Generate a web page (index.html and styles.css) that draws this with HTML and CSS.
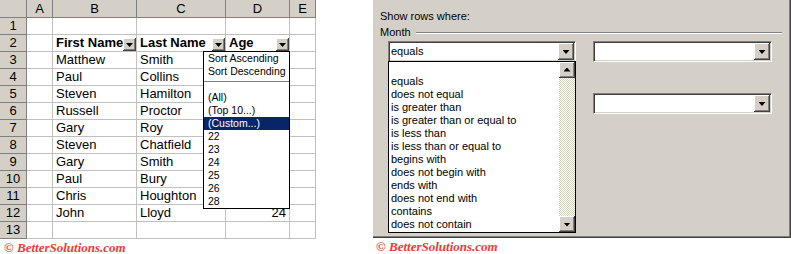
FILE: index.html
```html
<!DOCTYPE html>
<html lang="en">
<head>
    <meta charset="UTF-8">
    <title>AutoFilter</title>
    <link rel="stylesheet" href="styles.css">
</head>
<body>
    <div class="sheet-panel">
        <div class="sheet">
            <div class="cell hd"></div>
            <div class="cell hd">A</div>
            <div class="cell hd">B</div>
            <div class="cell hd">C</div>
            <div class="cell hd">D</div>
            <div class="cell hd">E</div>

            <div class="cell hd">1</div>
            <div class="cell"></div><div class="cell"></div><div class="cell"></div><div class="cell"></div><div class="cell"></div>

            <div class="cell hd">2</div>
            <div class="cell"></div>
            <div class="cell filter"><span class="label">First Name</span><span class="drop"></span></div>
            <div class="cell filter"><span class="label">Last Name</span><span class="drop"></span></div>
            <div class="cell filter"><span class="label">Age</span><span class="drop"></span></div>
            <div class="cell"></div>

            <div class="cell hd">3</div>
            <div class="cell"></div><div class="cell">Matthew</div><div class="cell">Smith</div><div class="cell"></div><div class="cell"></div>

            <div class="cell hd">4</div>
            <div class="cell"></div><div class="cell">Paul</div><div class="cell">Collins</div><div class="cell"></div><div class="cell"></div>

            <div class="cell hd">5</div>
            <div class="cell"></div><div class="cell">Steven</div><div class="cell">Hamilton</div><div class="cell"></div><div class="cell"></div>

            <div class="cell hd">6</div>
            <div class="cell"></div><div class="cell">Russell</div><div class="cell">Proctor</div><div class="cell"></div><div class="cell"></div>

            <div class="cell hd">7</div>
            <div class="cell"></div><div class="cell">Gary</div><div class="cell">Roy</div><div class="cell"></div><div class="cell"></div>

            <div class="cell hd">8</div>
            <div class="cell"></div><div class="cell">Steven</div><div class="cell">Chatfield</div><div class="cell"></div><div class="cell"></div>

            <div class="cell hd">9</div>
            <div class="cell"></div><div class="cell">Gary</div><div class="cell">Smith</div><div class="cell"></div><div class="cell"></div>

            <div class="cell hd">10</div>
            <div class="cell"></div><div class="cell">Paul</div><div class="cell">Bury</div><div class="cell"></div><div class="cell"></div>

            <div class="cell hd">11</div>
            <div class="cell"></div><div class="cell">Chris</div><div class="cell">Houghton</div><div class="cell"></div><div class="cell"></div>

            <div class="cell hd">12</div>
            <div class="cell"></div><div class="cell">John</div><div class="cell">Lloyd</div><div class="cell num">24</div><div class="cell"></div>

            <div class="cell hd">13</div>
            <div class="cell"></div><div class="cell"></div><div class="cell"></div><div class="cell"></div><div class="cell"></div>

            <!-- menu opened from the Age button -->
            <div class="filter-menu">
                <div class="item">Sort Ascending</div>
                <div class="item">Sort Descending</div>
                <div class="sep"></div>
                <div class="item">(All)</div>
                <div class="item">(Top 10...)</div>
                <div class="item selected">(Custom...)</div>
                <div class="item">22</div>
                <div class="item">23</div>
                <div class="item">24</div>
                <div class="item">25</div>
                <div class="item">26</div>
                <div class="item">28</div>
            </div>
        </div>
        <div class="credit">© BetterSolutions.com</div>
    </div>

    <div class="dialog-panel">
        <div class="dialog">
            <div class="caption">Show rows where:</div>
            <div class="group-title"><span>Month</span><span class="etch"></span></div>

            <div class="criteria">
                <div class="combo open">
                    <span class="value">equals</span>
                    <span class="btn"><span class="arrow down"></span></span>

                    <div class="list">
                        <div class="options">
                            <div class="opt">&nbsp;</div>
                            <div class="opt">equals</div>
                            <div class="opt">does not equal</div>
                            <div class="opt">is greater than</div>
                            <div class="opt">is greater than or equal to</div>
                            <div class="opt">is less than</div>
                            <div class="opt">is less than or equal to</div>
                            <div class="opt">begins with</div>
                            <div class="opt">does not begin with</div>
                            <div class="opt">ends with</div>
                            <div class="opt">does not end with</div>
                            <div class="opt">contains</div>
                            <div class="opt">does not contain</div>
                        </div>
                        <div class="scrollbar">
                            <span class="btn"><span class="arrow up"></span></span>
                            <span class="track"></span>
                            <span class="btn"><span class="arrow down"></span></span>
                        </div>
                    </div>
                </div>
                <div class="combo">
                    <span class="value"></span>
                    <span class="btn"><span class="arrow down"></span></span>
                </div>
                <div></div>
                <div class="combo">
                    <span class="value"></span>
                    <span class="btn"><span class="arrow down"></span></span>
                </div>
            </div>
        </div>
        <div class="credit">© BetterSolutions.com</div>
    </div>
</body>
</html>
```

FILE: styles.css
```css
body {
    margin: 0;
    background: #fff;
    font-family: "Liberation Sans", Arial, sans-serif;
    color: #000;
    display: flex;
    align-items: flex-start;
    gap: 57px;
}

/* spreadsheet */

.sheet-panel {
    width: 316px;
}

.sheet {
    position: relative;
    display: grid;
    grid-template-columns: 27px 26px 84px 89px 64px 26px;
    grid-template-rows: 18px repeat(13, 17px);
    font-size: 13px;
}

.cell {
    display: flex;
    align-items: center;
    padding: 0 3px;
    border-right: 1px solid #c0c0c0;
    border-bottom: 1px solid #c0c0c0;
    white-space: nowrap;
    line-height: 16px;
}

.cell.hd {
    background: #d4d0c8;
    border-color: #808080;
    justify-content: center;
    padding: 0;
}

.cell.num {
    justify-content: flex-end;
}

.cell.filter {
    padding-right: 0;
    font-weight: bold;
}

.cell.filter .label {
    overflow: hidden;
}

.drop {
    flex: 0 0 13px;
    height: 13px;
    align-self: flex-end;
    margin-left: auto;
    background: #d4d0c8;
    box-shadow: inset -1px -1px #404040, inset 1px 1px #fff, inset -2px -2px #808080;
    display: flex;
    align-items: center;
    justify-content: center;
}

.drop::after {
    content: "";
    width: 7px;
    height: 4px;
    margin-top: 1px;
    background: #000;
    clip-path: polygon(0 0, 100% 0, 50% 100%);
}

.filter-menu {
    position: absolute;
    left: 203px;
    top: 51px;
    width: 87px;
    height: 158px;
    box-sizing: border-box;
    border: 1px solid #000;
    background: #fff;
    font-size: 10.5px;
    line-height: 13px;
}

.filter-menu .item {
    padding-left: 4px;
    white-space: nowrap;
}

.filter-menu .item.selected {
    background: #0a246a;
    color: #fff;
}

.filter-menu .sep {
    height: 1px;
    margin: 3px 0 9px;
    background: #808080;
}

.credit {
    margin: 2px 0 0 4px;
    font: italic bold 13px "Liberation Serif", serif;
    line-height: 14px;
    color: #f03a36;
}

/* custom autofilter dialog */

.dialog-panel {
    width: 418px;
}

.dialog-panel .credit {
    margin-left: 3px;
}

.dialog {
    height: 238px;
    box-sizing: border-box;
    padding: 10px 8px 0 7px;
    background: #d4d0c8;
    border-right: 1px solid #404040;
    border-bottom: 1px solid #404040;
    box-shadow: inset -1px -1px #808080;
    font-size: 11px;
    line-height: 13px;
}

.group-title {
    display: flex;
    align-items: center;
    margin-top: 3px;
}

.etch {
    flex: 1;
    margin-left: 5px;
    border-top: 1px solid #808080;
    border-bottom: 1px solid #fff;
}

.criteria {
    display: grid;
    grid-template-columns: 188px 179px;
    grid-auto-rows: 21px;
    column-gap: 17px;
    row-gap: 31px;
    margin: 2px 0 0 8px;
}

.combo {
    position: relative;
    display: flex;
    box-sizing: border-box;
    background: #fff;
    border: 1px solid;
    border-color: #808080 #fff #fff #808080;
    box-shadow: inset 1px 1px #404040, inset -1px -1px #d4d0c8;
    padding: 1px;
}

.combo .value {
    flex: 1;
    padding-left: 1px;
    align-self: center;
}

.btn {
    width: 16px;
    background: #d4d0c8;
    box-shadow: inset -1px -1px #404040, inset 1px 1px #fff, inset -2px -2px #808080;
    display: flex;
    align-items: center;
    justify-content: center;
}

.arrow {
    width: 7px;
    height: 4px;
    background: #000;
}

.arrow.down {
    clip-path: polygon(0 0, 100% 0, 50% 100%);
    margin-top: 1px;
}

.arrow.up {
    clip-path: polygon(50% 0, 100% 100%, 0 100%);
    margin-top: -1px;
}

.list {
    position: absolute;
    left: -1px;
    top: 19px;
    width: 188px;
    height: 172px;
    box-sizing: border-box;
    border: 1px solid #000;
    background: #fff;
    display: flex;
}

.options {
    flex: 1;
    padding-left: 2px;
    white-space: nowrap;
}

.scrollbar {
    width: 16px;
    display: grid;
    grid-template-rows: 16px 1fr 16px;
}

.track {
    background: repeating-conic-gradient(#d4d0c8 0 25%, #fff 0 50%) 0 0 / 2px 2px;
}
```
